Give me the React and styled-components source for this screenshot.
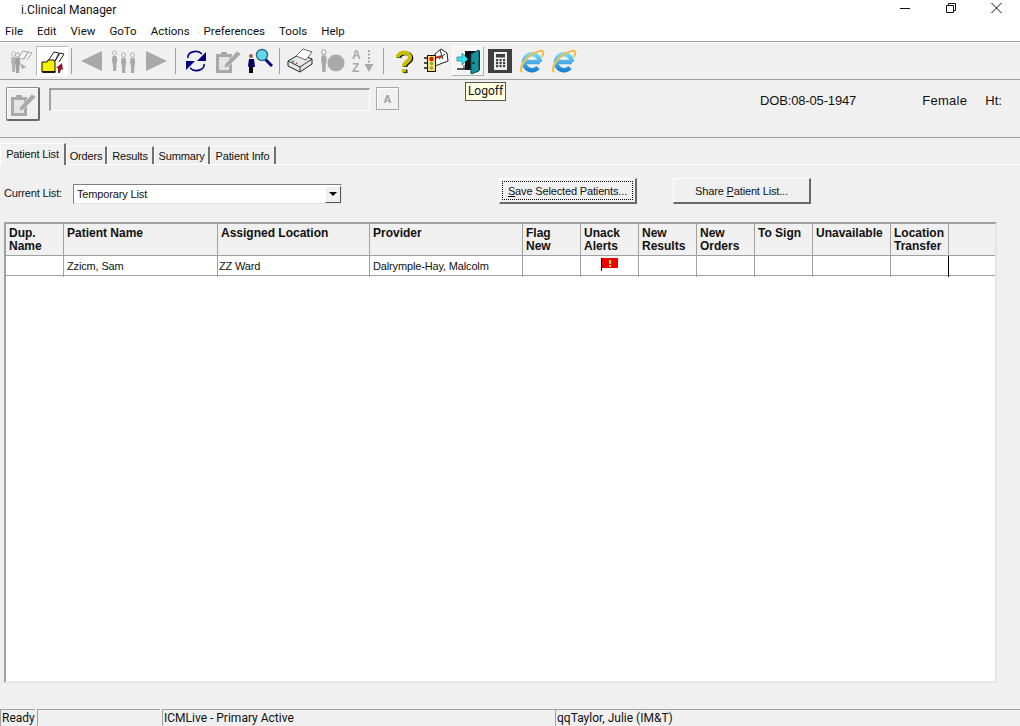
import React from "react";
import styled, { createGlobalStyle } from "styled-components";

const Global = createGlobalStyle`
  html, body { margin: 0; padding: 0; background: #f0f0f0; }
  * { box-sizing: border-box; }
`;
const Page = styled.div`
  width: 1020px; height: 726px; overflow: hidden; position: relative;
  display: flex; flex-direction: column; background: #f0f0f0;
  font-family: "Liberation Sans", Arial, sans-serif; color: #000;
`;
const TitleArea = styled.header`
  height: 42px; background: #fff; border-bottom: 1px solid #a0a0a0;
  display: flex; flex-direction: column; font-family: Roboto, sans-serif; font-size: 12px;
`;
const TitleBar = styled.div`
  height: 20px; display: flex; align-items: center; padding-left: 21px; color: #111;
`;
const TitleText = styled.span`flex: 1; line-height: 20px;`;
const WinControls = styled.div`display: flex; align-items: flex-start; height: 20px;`;
const WinBtn = styled.svg`width: 46px; height: 17px; display: block;`;
const Menu = styled.nav`
  display: flex; gap: 14px; padding: 1px 0 0 5px; height: 21px; align-items: center; color: #111; font-size: 11.5px;
`;
const Toolbar = styled.div`
  height: 38px; display: flex; align-items: center; padding: 0 0 0 4px;
  border-top: 1px solid #fff; border-bottom: 1px solid #a0a0a0;
`;
const ToolBtn = styled.div`
  width: 32px; height: 30px; display: flex; align-items: center; justify-content: center;
  ${p => p.$raised && `
    background: #f4f4f4;
    border: 1px solid #fff; border-right-color: #b0b0b0; border-bottom-color: #b0b0b0;
  `}
  ${p => p.$sunken && `
    background: #fdfdfd;
    border: 1px solid #b8b8b8; border-right-color: #fff; border-bottom-color: #fff;
  `}
`;
const ToolSep = styled.div`
  width: 8px; height: 26px; position: relative; flex: none;
  &::before { content: ""; position: absolute; left: 3px; top: 0; bottom: 0; width: 1px; background: #a0a0a0; }
`;
const Tooltip = styled.div`
  position: absolute; left: 465px; top: 82px; width: 41px; height: 19px;
  background: #ffffe1; border: 1px solid #555; font-family: Roboto, sans-serif; font-size: 12px;
  text-align: center; line-height: 17px; color: #111; z-index: 3;
`;
const PatientBar = styled.div`
  height: 58px; display: flex; align-items: flex-start; padding: 7px 0 0 6px; border-bottom: 1px solid #a0a0a0; flex: none;
`;
const NoteBtn = styled.div`
  width: 34px; height: 34px; display: flex; align-items: center; justify-content: center;
  border: 1px solid #8c8c8c; border-right: 2px solid #696969; border-bottom: 2px solid #696969;
  box-shadow: inset 1px 1px 0 #fff; border-radius: 2px;
`;
const NameField = styled.div`
  width: 321px; height: 23px; margin-left: 9px; margin-top: 1px;
  border-top: 2px solid #a0a0a0; border-left: 2px solid #a0a0a0;
  border-right: 1px solid #fff; border-bottom: 1px solid #fff; background: #eee;
`;
const AButton = styled.div`
  width: 23px; height: 23px; margin-left: 6px; border: 1px solid #a8a8a8; box-shadow: inset 1px 1px 0 #fff;
  color: #a0a0a0; font-size: 11px; font-weight: 700; display: flex; align-items: center; justify-content: center;
`;
const Demo = styled.span`
  font-size: 13px; line-height: 16px; margin-left: ${p => p.$ml}px; margin-top: 6px; white-space: nowrap; color: #111;
  letter-spacing: ${p => p.$ls || 0}px;
`;
const Tabs = styled.div`
  height: 27px; display: flex; align-items: flex-end; flex: none; border-bottom: 1px solid #fff;
  font-size: 11px; letter-spacing: -0.15px;
`;
const Tab = styled.div`
  height: ${p => (p.$active ? 22 : 18)}px; width: ${p => p.$w}px; flex: none; white-space: nowrap;
  display: flex; align-items: center; justify-content: center;
  border-top: 1px solid #fff; border-left: 1px solid #fff; border-right: 2px solid #707070;
  margin-bottom: ${p => (p.$active ? -1 : 0)}px; padding-bottom: ${p => (p.$active ? 2 : 0)}px;
  background: #f0f0f0; color: #111; position: relative;
`;
const Controls = styled.div`
  height: 57px; display: flex; align-items: flex-start; padding: 13px 0 0 4px; flex: none;
  font-size: 11px; letter-spacing: -0.15px;
`;
const ListLabel = styled.label`margin-top: 9px; width: 69px; white-space: nowrap; color: #111;`;
const Combo = styled.div`
  width: 269px; height: 20px; margin-top: 6px; background: #fff; display: flex; align-items: center;
  border-top: 1px solid #808080; border-left: 1px solid #808080; border-right: 1px solid #e4e4e4; border-bottom: 1px solid #e4e4e4;
  padding-left: 3px; justify-content: space-between; color: #111;
`;
const ComboArrow = styled.div`
  width: 16px; height: 17px; background: #f0f0f0; display: flex; align-items: center; justify-content: center;
  border: 1px solid #fff; border-right-color: #555; border-bottom-color: #555;
  &::after { content: ""; border: 4px solid transparent; border-top: 4px solid #000; border-bottom: 0; }
`;
const PushBtn = styled.button`
  width: 138px; height: 26px; margin-left: ${p => p.$ml}px; flex: none; padding: 0; font: inherit; letter-spacing: inherit; color: #111;
  background: #f0f0f0; position: relative; display: flex; align-items: center; justify-content: center;
  border: 1px solid #fff; border-right: 2px solid #696969; border-bottom: 2px solid #696969;
  ${p => p.$focus && `
    &::after { content: ""; position: absolute; inset: 2px; border: 1px dotted #000; }
  `}
`;
const Table = styled.div`
  width: 993px; height: 461px; margin-left: 4px; background: #fff; flex: none;
  border-top: 2px solid #a0a0a0; border-left: 2px solid #a0a0a0;
  border-right: 2px solid #e6e6e6; border-bottom: 2px solid #e6e6e6;
`;
const cols = "58px 154px 152px 153px 58px 58px 58px 58px 58px 78px 58px 1fr";
const HeadRow = styled.div`
  display: grid; grid-template-columns: ${cols}; height: 32px; background: #f0f0f0; border-bottom: 1px solid #a0a0a0;
`;
const HeadCell = styled.div`
  font-size: 12px; font-weight: 700; line-height: 13px; padding: 3px 0 0 3px; color: #111; white-space: pre-line;
  border-right: ${p => (p.$last ? "0" : "1px solid #a0a0a0")};
`;
const Row = styled.div`
  display: grid; grid-template-columns: ${cols}; height: 20px; border-bottom: 1px solid #a0a0a0;
`;
const Cell = styled.div`
  font-size: 11px; letter-spacing: -0.15px; line-height: 21px; padding-left: ${p => (p.$tight ? 1 : 3)}px; color: #111; white-space: nowrap;
  border-right: ${p => (p.$last ? "0" : p.$dark ? "1px solid #000" : "1px solid #a0a0a0")};
  ${p => p.$center && "display: flex; align-items: flex-start; justify-content: center; padding: 2px 0 0 0;"}
`;
const Spacer = styled.div`flex: 1;`;
const Status = styled.footer`
  height: 17px; display: flex; flex: none; font-family: Roboto, sans-serif; font-size: 12px; color: #111;
`;
const Pane = styled.div`
  width: ${p => p.$w}px; flex: ${p => (p.$grow ? 1 : "none")}; margin-right: ${p => p.$mr || 0}px; padding-left: 1px;
  border-top: 1px solid #a0a0a0; border-left: 1px solid #a0a0a0; line-height: 16px; white-space: nowrap;
`;

const G = "#a9a9a9";
const Person = ({ x, y, c = G, s = 1 }) => (
  <g transform={`translate(${x} ${y}) scale(${s})`}>
    <ellipse cx="2.5" cy="2" rx="1.8" ry="2.2" fill="#fff" stroke={c} strokeWidth="1" />
    <path d="M.6 5c-1 3-.5 6 .3 8l.2 7h3l.4-7c.8-2 1-5 0-8z" fill={c} />
  </g>
);
const Ico = styled.svg`display: block; flex: none;`;
const Icon = ({ children, w = 26, h = 26 }) => <Ico width={w} height={h} viewBox={`0 0 ${w} ${h}`}>{children}</Ico>;

const IconPeopleBook = () => (
  <Icon>
    <Person x={4} y={4} c="#b4b4b4" />
    <Person x={8} y={5} c="#a0a0a0" />
    <path d="M11 10l5-7 5 1-4 7zM17 11l4-7 4 1-5 7" fill="#f4f4f4" stroke="#a8a8a8" />
    <path d="M13 15l6 4-4 2z" fill="#a8a8a8" />
  </Icon>
);
const IconFolder = () => (
  <Icon>
    <path d="M9 13l6-9 5 1-4 8zM16 13l5-8 4 1-5 8" fill="#fff" stroke="#222" />
    <path d="M3 14h5l1-2h6l1 2v10H3z" fill="#f7f000" stroke="#111" />
    <path d="M3.500 24h13" stroke="#000" strokeWidth="1.600" />
    <path d="M19 25v-5l-2 0 6-5 1 7-2-.8-1 3.800z" fill="#8c1a2a" />
  </Icon>
);
const ArrowLeft = () => <Icon><path d="M2 13 23 3v20z" fill={G} /></Icon>;
const ArrowRight = () => <Icon><path d="M24 13 3 3v20z" fill={G} /></Icon>;
const People = () => (
  <Icon>
    <Person x={1} y={3} />
    <Person x={10} y={5} />
    <Person x={19} y={5} />
  </Icon>
);
const Refresh = () => (
  <Icon>
    <path d="M5 10c-1-6 9-9 14-4" fill="none" stroke="#000080" strokeWidth="1.600" />
    <path d="M23 4v9h-9z" fill="#000080" />
    <path d="M21 16c1 6-9 9-14 4" fill="none" stroke="#000080" strokeWidth="1.600" />
    <path d="M3 22v-9h9z" fill="#000080" />
  </Icon>
);
const Clipboard = () => (
  <Icon>
    <path d="M2.500 7.500h13v16h-13z" fill="#e4e4e4" stroke={G} strokeWidth="3" />
    <path d="M6 4h6v5H6z" fill={G} />
    <path d="M9 20l1-4L22 3l4 3-13 13z" fill={G} stroke="#f0f0f0" strokeWidth=".6" />
  </Icon>
);
const PersonSearch = () => (
  <Icon>
    <circle cx="4" cy="8" r="2" fill="#a06040" />
    <path d="M2 11h5l1 8H6l0 6H2l0-6-1-1z" fill="#000060" />
    <path d="M3 19h3v6H3z" fill="#000" />
    <path d="M17 10l8 8" stroke="#000080" strokeWidth="3" />
    <circle cx="15" cy="7" r="5.500" fill="#60d8e8" stroke="#2a6a90" strokeWidth="1.400" />
  </Icon>
);
const Printer = () => (
  <Icon>
    <path d="M1 13l12-7 12 5v5l-12 8-12-6z" fill="#e8e8e8" stroke="#222" />
    <path d="M1 13l12 6 12-8" fill="none" stroke="#333" />
    <path d="M13 19v5" stroke="#333" />
    <path d="M9 8l7-7 9 3-6 8z" fill="#fff" stroke="#666" />
    <path d="M5 13l2 1" stroke="#20a040" strokeWidth="1.500" />
    <path d="M9 15l1 .5" stroke="#c02020" strokeWidth="1.500" />
  </Icon>
);
const PersonCircle = () => (
  <Icon>
    <Person x={2} y={2} s={1.1} />
    <circle cx="17" cy="15" r="8.500" fill={G} />
  </Icon>
);
const AzText = styled.text`font-family: "Liberation Sans", sans-serif; font-weight: 700; font-size: 12px;`;
const SortAZ = () => (
  <Icon>
    <AzText x="1" y="11" fill={G}>A</AzText>
    <AzText x="1" y="24" fill={G}>Z</AzText>
    <path d="M18 2v14" stroke={G} strokeWidth="2" strokeDasharray="2 1.500" />
    <path d="M13.500 16h9L18 24z" fill={G} />
  </Icon>
);
const HelpMark = ({ c, dx = 0, dy = 0 }) => (
  <g transform={`translate(${dx} ${dy})`} stroke={c} fill="none">
    <path d="M7 9.500C7 3 19 3 19 9.500c0 4.500-6 4-6 9" strokeWidth="4.200" />
    <path d="M13 21v3.500" strokeWidth="4.400" />
  </g>
);
const Help = () => (
  <Icon>
    <HelpMark c="#000" dx={1.2} dy={0.6} />
    <HelpMark c="#c8be00" />
  </Icon>
);
const Traffic = () => (
  <Icon>
    <path d="M12 6l6-5 6 4 1 8-13 5z" fill="#fff" stroke="#222" />
    <path d="M17 2l3 9M22 6l-6 5" stroke="#333" fill="none" />
    <path d="M12 10l7-2" stroke="#c02020" strokeWidth="2" />
    <path d="M1 10h3M1 15h3M1 20h3" stroke="#111" strokeWidth="1.500" />
    <rect x="4" y="7" width="9" height="17" fill="#111" />
    <rect x="5" y="8" width="7" height="15" fill="#f2e860" />
    <circle cx="8.500" cy="11" r="2.200" fill="#e01010" />
    <circle cx="8.500" cy="15.500" r="1.800" fill="#a0a060" />
    <circle cx="8.500" cy="20" r="1.800" fill="#a0a060" />
  </Icon>
);
const Door = () => (
  <Icon>
    <path d="M10 3h15v19H10z" fill="#101010" />
    <path d="M16 6l8-4v21l-8 3z" fill="#16929e" stroke="#0a4a50" />
    <circle cx="18.500" cy="15" r="1" fill="#000" />
    <path d="M2 9h5V5l6 6-6 6v-4H2z" fill="#30e8f8" stroke="#0a4a50" strokeWidth=".5" />
    <path d="M2 21h12" stroke="#222" strokeWidth="1.500" />
    <path d="M9 17v4" stroke="#222" />
  </Icon>
);
const Calc = () => (
  <Icon w={24} h={24}>
    <rect width="24" height="24" fill="#404040" />
    <rect x="6" y="3" width="13" height="18" fill="#f0f0f0" />
    <rect x="8" y="5" width="9" height="3.500" fill="#404040" />
    {[10, 13, 16].map(y => [8, 11.5, 15].map(x => (
      <rect key={`${x}-${y}`} x={x} y={y} width="2.200" height="2.200" fill="#404040" />
    )))}
  </Icon>
);
const Ie = ({ id }) => (
  <Icon>
    <defs>
      <linearGradient id={id} x1="0" y1="0" x2="0" y2="1">
        <stop offset="0" stopColor="#78d8f8" />
        <stop offset="1" stopColor="#1c84d4" />
      </linearGradient>
    </defs>
    <path d="M21 14H5M21 14a8 8 0 1 0-2 5.500" fill="none" stroke={`url(#${id})`} strokeWidth="4.400" />
    <path d="M3 24C-1 21 7 6 21 3c4-1 4 2 2 6" fill="none" stroke="#e8c050" strokeWidth="2.200" />
  </Icon>
);

const Flag = () => (
  <svg width="17" height="13" viewBox="0 0 17 13">
    <rect x="1" y="0" width="16" height="10" fill="#ef0000" />
    <path d="M.5 0v13" stroke="#000" />
    <rect x="8" y="2" width="2" height="4" fill="#ffe000" />
    <rect x="8" y="7" width="2" height="2" fill="#ffe000" />
  </svg>
);

const headers = [
  "Dup.\nName", "Patient Name", "Assigned Location", "Provider", "Flag\nNew", "Unack\nAlerts",
  "New\nResults", "New\nOrders", "To Sign", "Unavailable", "Location\nTransfer", "",
];

export default function App() {
  return (
    <Page>
      <Global />
      <TitleArea>
        <TitleBar>
          <TitleText>i.Clinical Manager</TitleText>
          <WinControls>
            <WinBtn viewBox="0 0 46 17"><path d="M18 8.500h10" stroke="#111" /></WinBtn>
            <WinBtn viewBox="0 0 46 17"><path d="M18.500 5.500h7v7h-7zM20.500 5.500v-2h7v7h-2" fill="none" stroke="#111" /></WinBtn>
            <WinBtn viewBox="0 0 46 17"><path d="M17.500 3l10 10M27.500 3l-10 10" stroke="#111" /></WinBtn>
          </WinControls>
        </TitleBar>
        <Menu>
          {["File", "Edit", "View", "GoTo", "Actions", "Preferences", "Tools", "Help"].map(m => <span key={m}>{m}</span>)}
        </Menu>
      </TitleArea>
      <Toolbar>
        <ToolBtn><IconPeopleBook /></ToolBtn>
        <ToolBtn $sunken><IconFolder /></ToolBtn>
        <ToolSep />
        <ToolBtn><ArrowLeft /></ToolBtn>
        <ToolBtn><People /></ToolBtn>
        <ToolBtn><ArrowRight /></ToolBtn>
        <ToolSep />
        <ToolBtn><Refresh /></ToolBtn>
        <ToolBtn><Clipboard /></ToolBtn>
        <ToolBtn><PersonSearch /></ToolBtn>
        <ToolSep />
        <ToolBtn><Printer /></ToolBtn>
        <ToolBtn><PersonCircle /></ToolBtn>
        <ToolBtn><SortAZ /></ToolBtn>
        <ToolSep />
        <ToolBtn><Help /></ToolBtn>
        <ToolBtn><Traffic /></ToolBtn>
        <ToolBtn $raised><Door /></ToolBtn>
        <ToolBtn><Calc /></ToolBtn>
        <ToolBtn><Ie id="ie1" /></ToolBtn>
        <ToolBtn><Ie id="ie2" /></ToolBtn>
      </Toolbar>
      <Tooltip>Logoff</Tooltip>
      <PatientBar>
        <NoteBtn><Clipboard /></NoteBtn>
        <NameField />
        <AButton>A</AButton>
        <Demo $ml={361} $ls={-0.15}>DOB:08-05-1947</Demo>
        <Demo $ml={66} $ls={0.3}>Female</Demo>
        <Demo $ml={18}>Ht:</Demo>
      </PatientBar>
      <Tabs>
        <Tab $active $w={66}>Patient List</Tab>
        <Tab $w={41}>Orders</Tab>
        <Tab $w={47}>Results</Tab>
        <Tab $w={56}>Summary</Tab>
        <Tab $w={66}>Patient Info</Tab>
      </Tabs>
      <Controls>
        <ListLabel>Current List:</ListLabel>
        <Combo>Temporary List<ComboArrow /></Combo>
        <PushBtn $ml={157} $focus><span><u>S</u>ave Selected Patients...</span></PushBtn>
        <PushBtn $ml={36}><span>Share <u>P</u>atient List...</span></PushBtn>
      </Controls>
      <Table>
        <HeadRow>
          {headers.map((h, i) => <HeadCell key={i} $last={i === headers.length - 1}>{h}</HeadCell>)}
        </HeadRow>
        <Row>
          <Cell />
          <Cell>Zzicm, Sam</Cell>
          <Cell $tight>ZZ Ward</Cell>
          <Cell>Dalrymple-Hay, Malcolm</Cell>
          <Cell />
          <Cell $center><Flag /></Cell>
          <Cell />
          <Cell />
          <Cell />
          <Cell />
          <Cell $dark />
          <Cell $last />
        </Row>
      </Table>
      <Spacer />
      <Status>
        <Pane $w={35} $mr={2}>Ready</Pane>
        <Pane $w={123} $mr={2} />
        <Pane $w={393} $mr={0}>ICMLive - Primary Active</Pane>
        <Pane $grow>qqTaylor, Julie (IM&amp;T)</Pane>
      </Status>
    </Page>
  );
}
